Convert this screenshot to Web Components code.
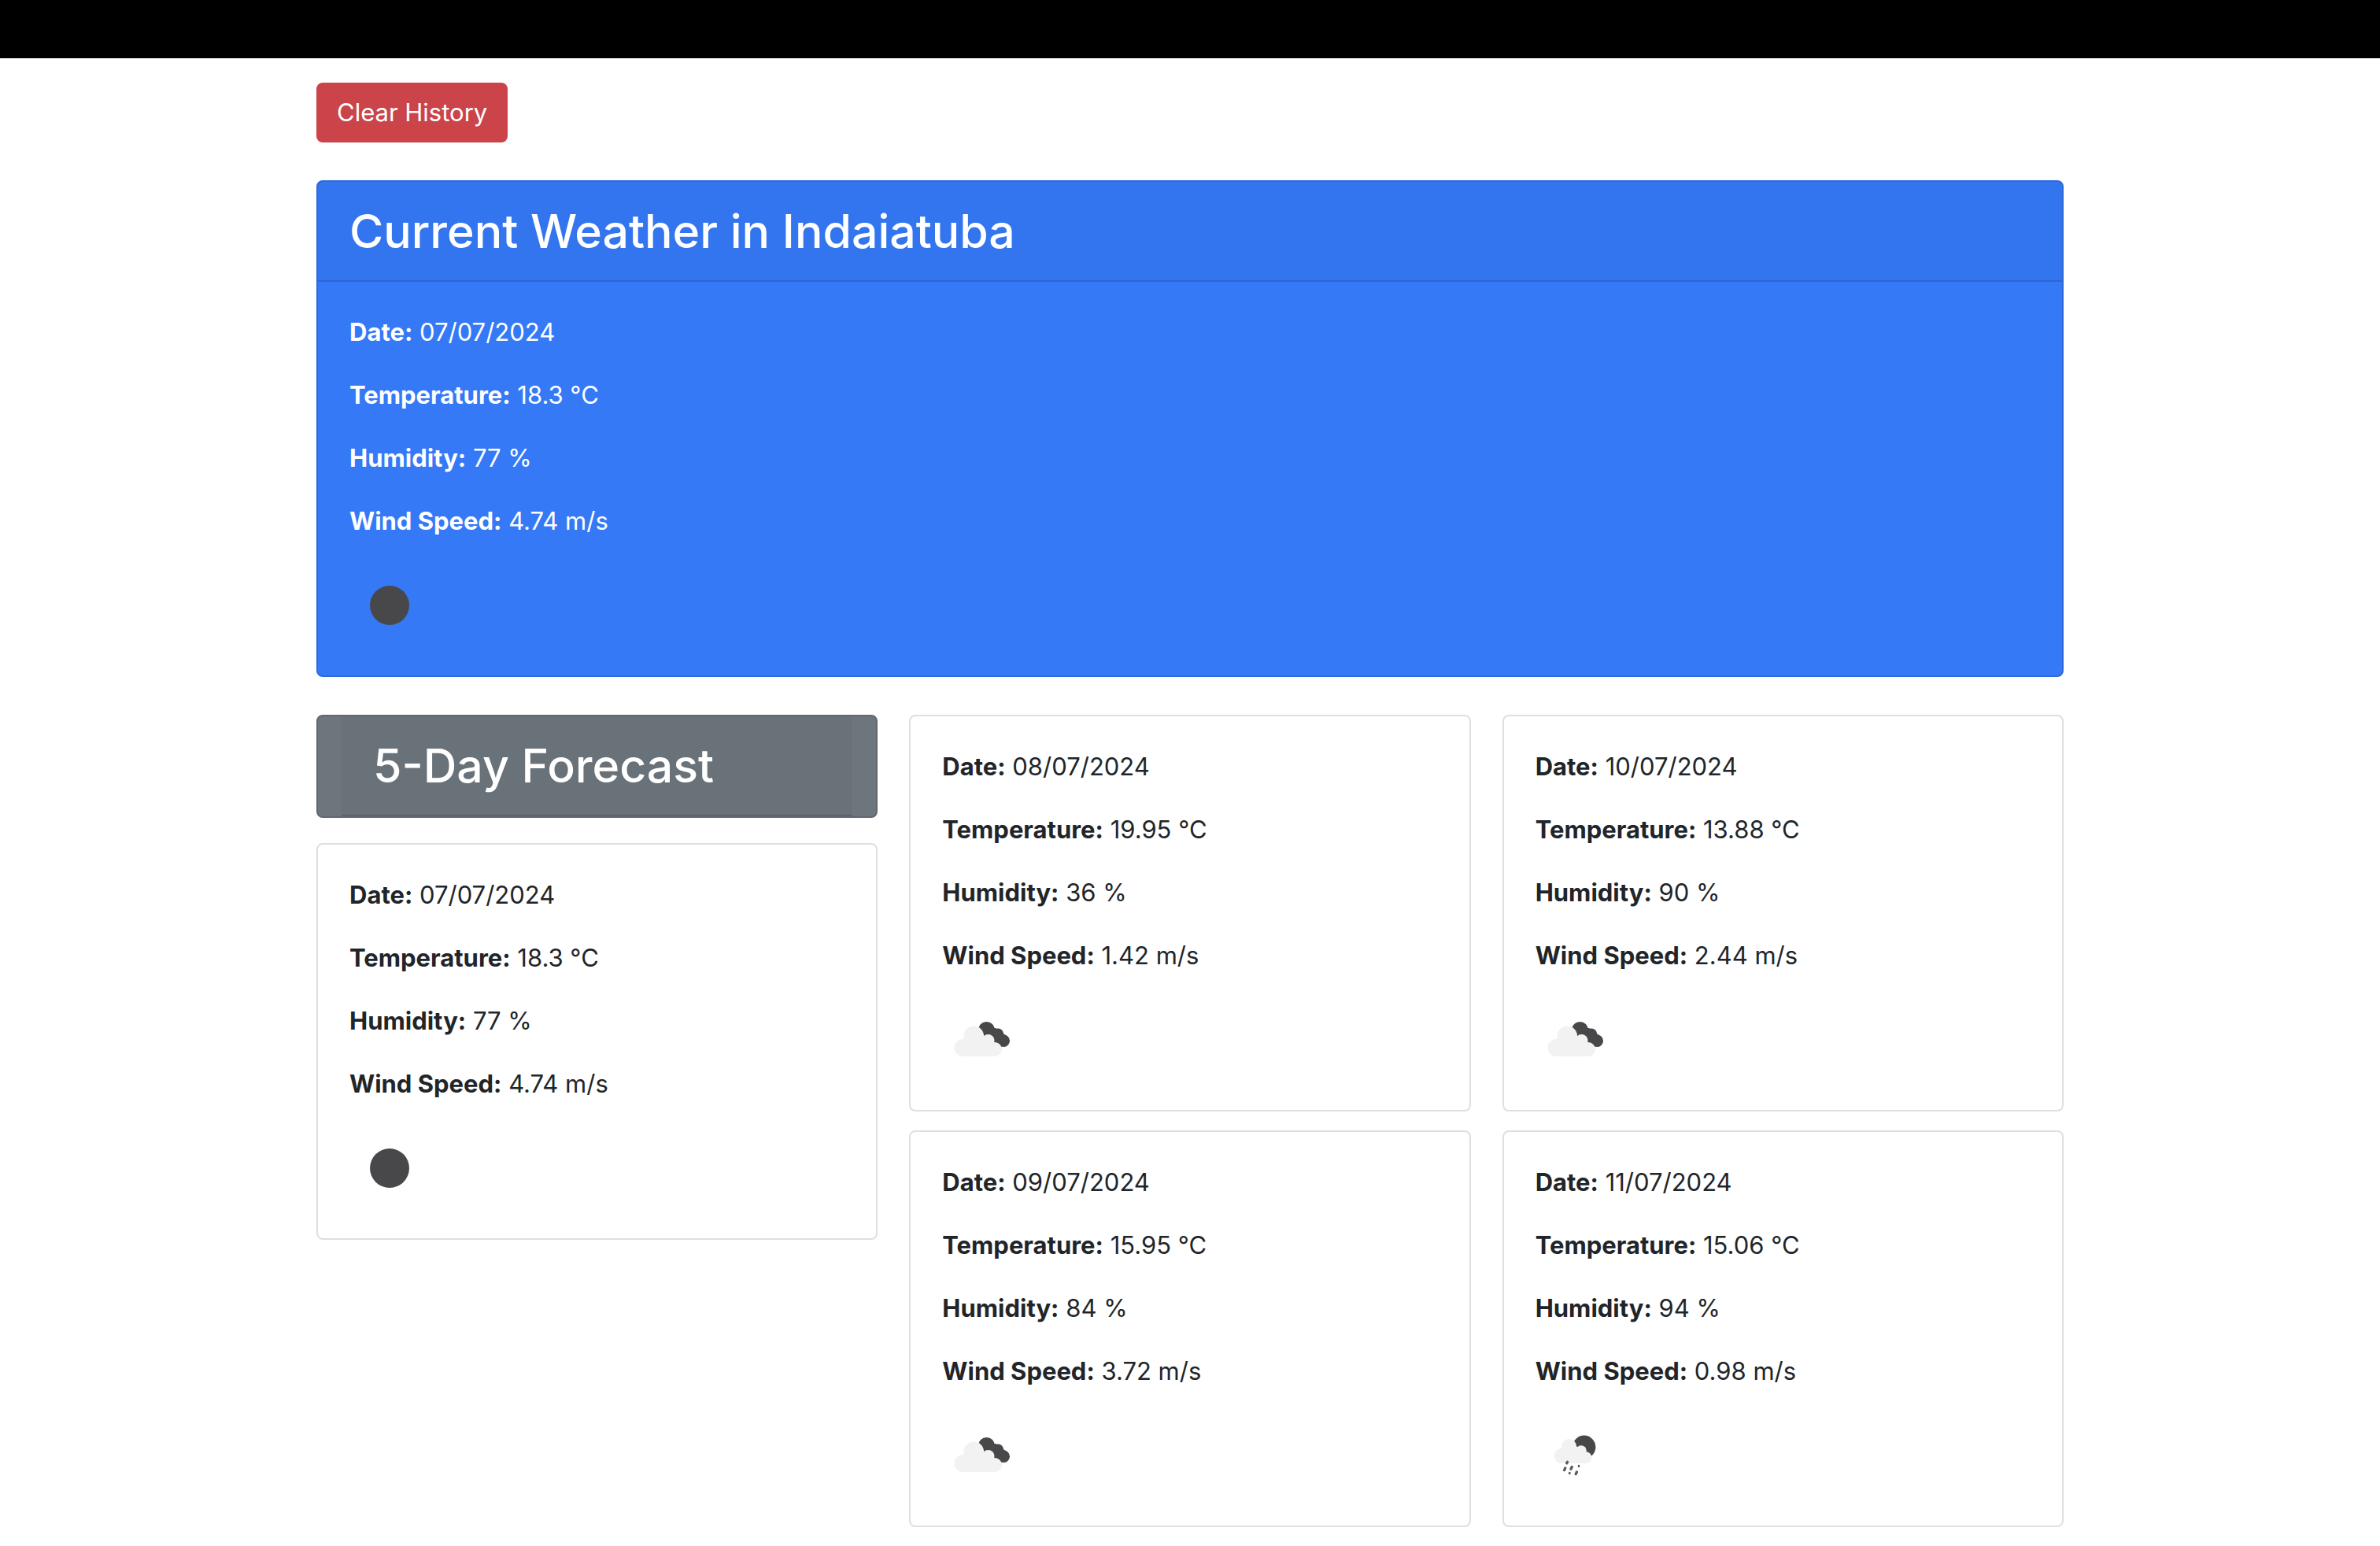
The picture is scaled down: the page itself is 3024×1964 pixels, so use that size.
<!DOCTYPE html>
<html lang="en">
<head>
<meta charset="utf-8">
<title>Weather Dashboard</title>
<style>
  body { margin: 0; background: #fff; color: #212529; font: 400 31px/48px Inter, "Liberation Sans", sans-serif; }
</style>
</head>
<body>
<weather-dashboard></weather-dashboard>

<template id="dashboard">
  <style>
    :host { display: block; }
    * { box-sizing: border-box; }
    .navbar { height: 74px; background: #000; }
    main { max-width: 2220px; margin: 0 auto; padding: 31px 0 24px; }
    .current { margin: 48px 0; }
    .forecast { display: grid; grid-template-columns: repeat(3, 1fr); gap: 40px; align-items: start; }
    .column { display: flex; flex-direction: column; gap: 24px; }
    .column.first { gap: 32px; }
  </style>
  <header class="navbar"></header>
  <main>
    <clear-button>Clear History</clear-button>
    <weather-card class="current" tone="primary" date="07/07/2024" temperature="18.3" humidity="77" wind="4.74" icon="moon">
      <card-header slot="header">Current Weather in Indaiatuba</card-header>
    </weather-card>
    <section class="forecast">
      <div class="column first">
        <forecast-title>5-Day Forecast</forecast-title>
        <weather-card date="07/07/2024" temperature="18.3" humidity="77" wind="4.74" icon="moon"></weather-card>
      </div>
      <div class="column">
        <weather-card date="08/07/2024" temperature="19.95" humidity="36" wind="1.42" icon="clouds"></weather-card>
        <weather-card date="09/07/2024" temperature="15.95" humidity="84" wind="3.72" icon="clouds"></weather-card>
      </div>
      <div class="column">
        <weather-card date="10/07/2024" temperature="13.88" humidity="90" wind="2.44" icon="clouds"></weather-card>
        <weather-card date="11/07/2024" temperature="15.06" humidity="94" wind="0.98" icon="rain"></weather-card>
      </div>
    </section>
  </main>
</template>

<template id="button">
  <style>
    :host { display: flex; }
    button { margin: 0; padding: 12px 24px; border: 2px solid #cb444a; border-radius: 8px; background: #cb444a; color: #fff; font: inherit; cursor: pointer; }
  </style>
  <button type="button"><slot></slot></button>
</template>

<template id="header">
  <style>
    :host { display: block; padding: 24px 40px; border-bottom: 2px solid rgba(0, 0, 0, .125); border-radius: 6px 6px 0 0; background: rgba(0, 0, 0, .03); color: #fff; }
    h2 { margin: 0; font-size: 59px; font-weight: 500; line-height: 77px; }
  </style>
  <h2><slot></slot></h2>
</template>

<template id="title">
  <style>
    :host { display: block; padding: 0 30px; border: 2px solid #61686f; border-radius: 8px; background: #6d757d; }
  </style>
  <card-header><slot></slot></card-header>
</template>

<template id="card">
  <style>
    :host { display: block; border: 2px solid #dfdfdf; border-radius: 8px; background: #fff; }
    :host([tone="primary"]) { border-color: #2e6ad8; background: #3579f7; color: #fff; }
    .body { padding: 40px; }
    p { margin: 0 0 32px; }
    strong { font-weight: 700; }
    weather-icon { width: 100px; height: 100px; }
  </style>
  <slot name="header"></slot>
  <div class="body">
    <p><strong>Date:</strong> <span data-field="date"></span></p>
    <p><strong>Temperature:</strong> <span data-field="temperature"></span> °C</p>
    <p><strong>Humidity:</strong> <span data-field="humidity"></span> %</p>
    <p><strong>Wind Speed:</strong> <span data-field="wind"></span> m/s</p>
    <weather-icon></weather-icon>
  </div>
</template>

<script>
  const stamp = (host, id) => {
    const root = host.attachShadow({ mode: "open" });
    root.append(document.getElementById(id).content.cloneNode(true));
    return root;
  };

  const ICONS = {
    moon: `<circle cx="51" cy="51" r="25" fill="#48484a"/>`,
    clouds: `
      <g fill="#48484a">
        <circle cx="56.5" cy="38.5" r="10.5"/><circle cx="71" cy="43.5" r="7"/><circle cx="78.3" cy="52.3" r="7.7"/>
        <path d="M47 35L54 46L66 56L76 60L82 46L68 36Z"/>
      </g>
      <g fill="#f2f2f2">
        <circle cx="26.5" cy="61" r="11"/><circle cx="40.3" cy="46.3" r="12.8"/>
        <circle cx="58.5" cy="52" r="8"/><circle cx="67" cy="63" r="9"/>
        <path d="M26 50L48 44L66 52L67 72H26Z"/>
      </g>`,
    rain: `
      <circle cx="61.7" cy="40.3" r="14.7" fill="#48484a"/>
      <g fill="#f2f2f2">
        <circle cx="33" cy="51.5" r="9.5"/><circle cx="42.5" cy="39.5" r="9.5"/>
        <circle cx="58" cy="45" r="6.8"/><circle cx="64" cy="53.7" r="7.5"/>
        <path d="M33 43L50 38L62 46L64 61H33Z"/>
      </g>
      <g stroke="#5c5c5e" stroke-width="3.4" stroke-linecap="round">
        <path d="M40.5 59.4L39.7 60.8M37.8 67L36.6 69.6M46.3 65.5L45 68.3M52.4 72L51.2 74.6"/>
        <path d="M55 64V65M43.3 73V74" stroke-width="2.6"/>
      </g>`
  };

  customElements.define("weather-icon", class extends HTMLElement {
    constructor() {
      super();
      this.attachShadow({ mode: "open" });
    }
    static observedAttributes = ["name"];
    attributeChangedCallback(attribute, previous, name) {
      this.shadowRoot.innerHTML = `
        <style>:host { display: block; } svg { display: block; width: 100%; height: 100%; }</style>
        <svg viewBox="0 0 100 100" aria-hidden="true">${ICONS[name]}</svg>`;
    }
  });

  customElements.define("weather-card", class extends HTMLElement {
    connectedCallback() {
      if (this.shadowRoot) return;
      const root = stamp(this, "card");
      for (const field of root.querySelectorAll("[data-field]")) {
        field.textContent = this.getAttribute(field.dataset.field);
      }
      root.querySelector("weather-icon").setAttribute("name", this.getAttribute("icon"));
    }
  });

  for (const [tag, id] of [["clear-button", "button"], ["card-header", "header"], ["forecast-title", "title"], ["weather-dashboard", "dashboard"]]) {
    customElements.define(tag, class extends HTMLElement {
      constructor() {
        super();
        stamp(this, id);
      }
    });
  }
</script>
</body>
</html>
